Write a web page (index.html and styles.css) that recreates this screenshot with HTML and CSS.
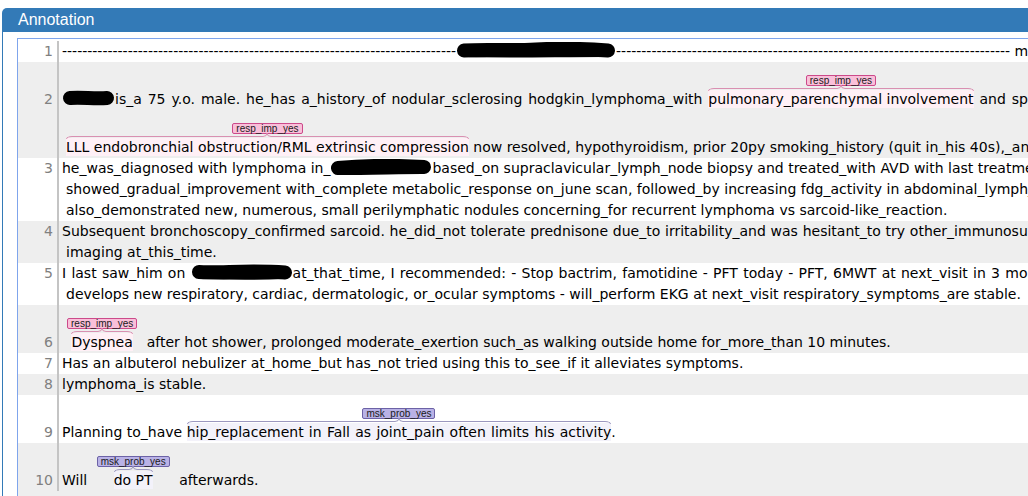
FILE: index.html
```html
<!DOCTYPE html>
<html>
<head>
<meta charset="utf-8">
<title>Annotation</title>
<link rel="stylesheet" href="styles.css">
</head>
<body>
<div class="panel">
  <div class="panel-header">Annotation</div>
  <div class="panel-body">
    <div class="doc">

      <div class="row r1">
        <div class="num">1</div>
        <div class="text">
          <div class="line">------------------------------------------------------------------------------<svg class="redact" width="160" height="16" viewBox="0 0 160 16"><path d="M8 8.5 C30 7 55 9 80 7.5 S125 6.5 152 8.5"/><path class="thin" d="M12 10 C50 11 100 10 148 10"/></svg>------------------------------------------------------------------------------ m</div>
        </div>
      </div>

      <div class="row alt">
        <div class="num a">2</div>
        <div class="text">
          <div class="line a ws-wide"><svg class="redact" width="53" height="16" viewBox="0 0 53 16"><path d="M8 8 C20 7 32 9 45 8"/></svg>is_a 75 y.o. male. he_has a_history_of nodular_sclerosing hodgkin_lymphoma_with <span class="ann resp"><span class="tag">resp_imp_yes</span><span class="at"><span class="hl">pulmonary_parenchymal involvement<span class="brace"><i class="bl"></i><svg width="8" height="4" viewBox="0 0 8 4"><path d="M0 3.5 Q4 3.5 4 0 Q4 3.5 8 3.5"/></svg><i class="br"></i></span></span></span></span> and spinal involvement, treated_with chemotherapy</div>
          <div class="line a c"><span class="ann resp"><span class="tag">resp_imp_yes</span><span class="at"><span class="hl">LLL endobronchial obstruction/RML extrinsic compression<span class="brace"><i class="bl"></i><svg width="8" height="4" viewBox="0 0 8 4"><path d="M0 3.5 Q4 3.5 4 0 Q4 3.5 8 3.5"/></svg><i class="br"></i></span></span></span></span> now resolved, hypothyroidism, prior 20py smoking_history (quit in_his 40s),_and others.</div>
        </div>
      </div>

      <div class="row">
        <div class="num">3</div>
        <div class="text">
          <div class="line">he_was_diagnosed with lymphoma in_<svg class="redact" width="102" height="16" viewBox="0 0 102 16"><path d="M8 9 C30 7 60 6 94 8"/><path class="thin" d="M10 11 C40 11 70 10 92 10"/></svg>based_on supraclavicular_lymph_node biopsy and treated_with AVD with last treatment in the spring, and</div>
          <div class="line c">showed_gradual_improvement with_complete metabolic_response on_june scan, followed_by increasing fdg_activity in abdominal_lymph_nodes. CT</div>
          <div class="line c">also_demonstrated new, numerous, small perilymphatic nodules concerning_for recurrent lymphoma vs sarcoid-like_reaction.</div>
        </div>
      </div>

      <div class="row alt">
        <div class="num">4</div>
        <div class="text">
          <div class="line ws-thin">Subsequent bronchoscopy_confirmed sarcoid. he_did_not tolerate prednisone due_to irritability_and was hesitant_to try other_immunosuppression. No</div>
          <div class="line c">imaging at_this_time.</div>
        </div>
      </div>

      <div class="row">
        <div class="num">5</div>
        <div class="text">
          <div class="line ws-mid">I last saw_him on <svg class="redact" width="102" height="16" viewBox="0 0 102 16"><path d="M8 8 C30 9 60 6 94 8.5"/><path class="thin" d="M10 10 C40 11 70 11 92 10"/></svg>at_that_time, I recommended: - Stop bactrim, famotidine - PFT today - PFT, 6MWT at next_visit in 3 months or sooner if he</div>
          <div class="line c">develops new respiratory, cardiac, dermatologic, or_ocular symptoms - will_perform EKG at next_visit respiratory_symptoms_are stable.</div>
        </div>
      </div>

      <div class="row alt">
        <div class="num a">6</div>
        <div class="text">
          <div class="line a"><span class="ann resp wide"><span class="tag">resp_imp_yes</span><span class="at"><span class="hl">Dyspnea<span class="brace"><i class="bl"></i><svg width="8" height="4" viewBox="0 0 8 4"><path d="M0 3.5 Q4 3.5 4 0 Q4 3.5 8 3.5"/></svg><i class="br"></i></span></span></span></span> after hot shower, prolonged moderate_exertion such_as walking outside home for_more_than 10 minutes.</div>
        </div>
      </div>

      <div class="row">
        <div class="num">7</div>
        <div class="text">
          <div class="line">Has an albuterol nebulizer at_home_but has_not tried using this to_see_if it alleviates symptoms.</div>
        </div>
      </div>

      <div class="row alt">
        <div class="num">8</div>
        <div class="text">
          <div class="line">lymphoma_is stable.</div>
        </div>
      </div>

      <div class="row">
        <div class="num a">9</div>
        <div class="text">
          <div class="line a">Planning to_have <span class="ann msk ws-mid"><span class="tag">msk_prob_yes</span><span class="at"><span class="hl">hip_replacement in Fall as joint_pain often limits his activity<span class="brace"><i class="bl"></i><svg width="8" height="4" viewBox="0 0 8 4"><path d="M0 3.5 Q4 3.5 4 0 Q4 3.5 8 3.5"/></svg><i class="br"></i></span></span></span></span>.</div>
        </div>
      </div>

      <div class="row alt last">
        <div class="num a">10</div>
        <div class="text">
          <div class="line a">Will <span class="ann msk wide"><span class="tag">msk_prob_yes</span><span class="at"><span class="hl">do PT<span class="brace"><i class="bl"></i><svg width="8" height="4" viewBox="0 0 8 4"><path d="M0 3.5 Q4 3.5 4 0 Q4 3.5 8 3.5"/></svg><i class="br"></i></span></span></span></span> afterwards.</div>
        </div>
      </div>

    </div>
  </div>
</div>
</body>
</html>
```

FILE: styles.css
```css
* {
  box-sizing: border-box;
}

html,
body {
  margin: 0;
  padding: 0;
  background: #ffffff;
  overflow: hidden;
}

body {
  width: 1028px;
  height: 496px;
}

.panel {
  margin: 8px 0 0 2px;
  width: 1120px;
}

.panel-header {
  height: 24px;
  background: #337ab7;
  color: #ffffff;
  border-top-left-radius: 5px;
  padding-left: 16px;
  font: 16px/24px "Liberation Sans", Arial, sans-serif;
}

.panel-body {
  border-left: 1px solid #337ab7;
  padding: 6px 0 0 14px;
  height: 480px;
}

.doc {
  border: 1px solid #7fa5ec;
  font: 14px/21px "DejaVu Sans", Verdana, sans-serif;
  color: #000000;
}

.row {
  display: flex;
}

.row.alt {
  background: #eeeeee;
}

.r1 {
  padding-top: 2px;
}

.last {
  padding-bottom: 6px;
}

.num {
  flex: 0 0 41px;
  width: 41px;
  border-right: 2px solid #c4c4c4;
  text-align: right;
  padding-right: 4px;
  color: #808080;
}

.num.a {
  padding-top: 27px;
}

.text {
  flex: 1;
  min-width: 0;
  padding-left: 3px;
  overflow: hidden;
}

.line {
  white-space: pre;
  height: 21px;
}

.line.a {
  height: 48px;
  padding-top: 13px;
}

.line.c {
  padding-left: 4px;
}

/* compensate for Verdana's wider spaces/underscores */
.ws-wide {
  word-spacing: 1.5px;
}

.ws-mid {
  word-spacing: 0.8px;
}

.ws-thin {
  word-spacing: 0.3px;
}

.ws-wide .ann,
.ws-mid .ann {
  word-spacing: normal;
}

.ws-mid.ann .hl {
  word-spacing: 0.8px;
}

.redact {
  display: inline-block;
  vertical-align: -2px;
}

.redact path {
  fill: none;
  stroke: #000000;
  stroke-width: 14;
  stroke-linecap: round;
  stroke-linejoin: round;
}

.redact path.thin {
  stroke-width: 10;
}

/* annotations */
.ann {
  display: inline-block;
  text-align: center;
  vertical-align: baseline;
}

.ann.wide {
  margin: 0 5px;
}

.tag {
  display: block;
  width: fit-content;
  margin: 0 auto 3px;
  height: 11px;
  padding: 0 3px;
  border: 1px solid;
  border-radius: 2px;
  font: 10px/9px "Liberation Sans", Arial, sans-serif;
  color: #1a1a1a;
}

.at {
  display: block;
  line-height: 21px;
}

.hl {
  position: relative;
  padding: 1px 0;
}

.brace {
  position: absolute;
  left: 0;
  right: 0;
  top: -5px;
  height: 6px;
  display: flex;
}

.brace svg {
  flex: 0 0 8px;
  display: block;
}

.brace svg path {
  fill: none;
  stroke: currentColor;
  stroke-width: 1;
}

.bl,
.br {
  flex: 1;
  height: 3px;
  margin-top: 3px;
  border-top: 1px solid currentColor;
}

.bl {
  border-left: 1px solid currentColor;
  border-top-left-radius: 6px 3px;
}

.br {
  border-right: 1px solid currentColor;
  border-top-right-radius: 6px 3px;
}

.resp .tag {
  background: #f9bfd9;
  border-color: #cc4a8a;
}

.resp .hl {
  background: #fff0f6;
}

.resp .brace {
  color: #d98fb1;
}

.msk .tag {
  background: #b9b2e6;
  border-color: #6c62a6;
}

.msk .hl {
  background: #f3f2fa;
}

.msk .brace {
  color: #9c98bf;
}
```
